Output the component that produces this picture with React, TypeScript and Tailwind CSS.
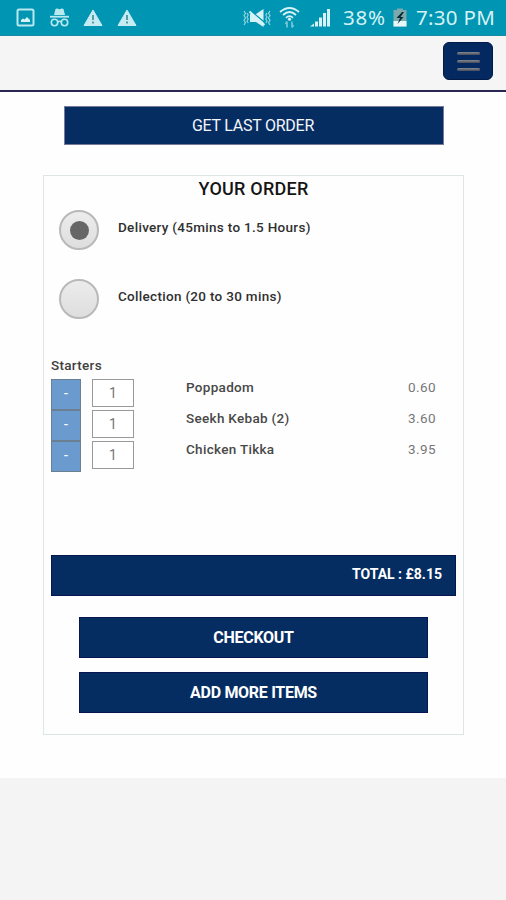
import { useState } from 'react';

const starters = [
  { id: 'poppadom', name: 'Poppadom', qty: 1, price: '0.60' },
  { id: 'seekh-kebab', name: 'Seekh Kebab (2)', qty: 1, price: '3.60' },
  { id: 'chicken-tikka', name: 'Chicken Tikka', qty: 1, price: '3.95' },
];

const methods = [
  { id: 'delivery', label: 'Delivery (45mins to 1.5 Hours)' },
  { id: 'collection', label: 'Collection (20 to 30 mins)' },
];

function WarningIcon() {
  return (
    <svg width="20" height="18" viewBox="0 0 20 18">
      <path d="M10 1 L19 16.5 H1 Z" fill="#c4ecf2" stroke="#c4ecf2" strokeLinejoin="round" />
      <path d="M10 6 V11 M10 12.5 V14.5" stroke="#3d8796" strokeWidth="1.6" />
    </svg>
  );
}

function StatusBar() {
  return (
    <div className="flex h-[36px] items-center justify-between border-b border-[#1b8ba3] bg-[#0095b2] pl-4 pr-[11px]">
      <div className="flex items-center">
        <svg width="19" height="19" viewBox="0 0 19 19">
          <rect x="1.5" y="1.5" width="16" height="16" rx="1.5" fill="none" stroke="#b9e8ef" strokeWidth="2" />
          <path d="M5 14 V12 L7 10.5 L8.5 11.5 L11 9 L14 12 V14 Z" fill="#d5f3f6" />
        </svg>
        <svg className="ml-[14px]" width="21" height="19" viewBox="0 0 21 19">
          <path d="M6.5 1 Q7.5 0 8.5 .6 Q10.5 1.8 12.5 .6 Q13.5 0 14.5 1 L16 7 H5 Z" fill="#b9e8ef" />
          <path d="M1 7.8 H20 V9.6 H1 Z" fill="#b9e8ef" />
          <g fill="none" stroke="#b9e8ef" strokeWidth="1.6">
            <circle cx="5.5" cy="14.5" r="3.2" />
            <circle cx="15.5" cy="14.5" r="3.2" />
            <path d="M8.5 14 Q10.5 12.5 12.5 14" />
          </g>
        </svg>
        <div className="ml-[13px] flex gap-[14px]">
          <WarningIcon />
          <WarningIcon />
        </div>
      </div>
      <div className="flex items-center font-['Noto_Sans',sans-serif] text-[#d5f2f6]">
        {/* Sound off, vibrating */}
        <svg width="29" height="18" viewBox="0 0 29 18">
          <path d="M7 5 H13 L20.5 0 V18 L13 13 H7 Z" fill="#d5f2f6" />
          <path d="M8.5 2.5 L23 14.5" stroke="#0095b2" strokeWidth="1.4" />
          <path d="M6.5 2.5 L21.5 16" stroke="#d5f2f6" strokeWidth="2" />
          <g fill="none" stroke="#8fd5e2" strokeWidth="1.2">
            <path d="M1 2 L2.5 4.3 L1 6.6 L2.5 9 L1 11.3 L2.5 13.6 L1 16 M4 4 L5.2 6 L4 8 L5.2 10 L4 12 L5.2 14" />
            <path d="M27 2 L25.5 4.3 L27 6.6 L25.5 9 L27 11.3 L25.5 13.6 L27 16 M24 4 L22.8 6 L24 8 L22.8 10 L24 12 L22.8 14" />
          </g>
        </svg>
        <svg className="ml-[7px]" width="21" height="21" viewBox="0 0 21 21">
          <g fill="none" stroke="#d5f2f6" strokeWidth="1.8">
            <path d="M1 5 Q10.5 -3 20 5" />
            <path d="M4 8 Q10.5 2 17 8" />
            <path d="M7 10.8 Q10.5 7.3 14 10.8" />
          </g>
          <circle cx="10.5" cy="12.2" r="1.6" fill="#d5f2f6" />
          <path d="M8 20.5 V14.5 M6.5 17 L8 14.5 M13 14.5 V20.5 M14.5 18 L13 20.5" stroke="#75c8d8" strokeWidth="1.7" fill="none" />
        </svg>
        <svg className="ml-[10px]" width="21" height="19" viewBox="0 0 21 19">
          <path d="M0 18.5 L4 15.5 V18.5 Z M5 18.5 V13.5 H8 V18.5 Z M9 18.5 V9.5 H12 V18.5 Z M13 18.5 V5 H16 V18.5 Z M17 18.5 V1 H20 V18.5 Z" fill="#d5f2f6" />
        </svg>
        <span className="ml-3 w-[45px] whitespace-nowrap pb-[2px] text-[20.5px] leading-[32px] tracking-[0.8px]">38%</span>
        <svg className="ml-[5px]" width="14" height="19" viewBox="0 0 14 19">
          <path d="M4 2 V0.5 H10 V2 H13.5 V18.5 H0.5 V2 Z" fill="#7ba9ae" />
          <path d="M0.5 13 H13.5 V18.5 H0.5 Z" fill="#e7f8fa" />
          <path d="M9 4 L3.5 10 H7 L4.5 16 L10.5 9 H7.5 L11 4 Z" fill="#082b30" />
        </svg>
        <span className="ml-[9px] w-[79px] whitespace-nowrap pb-[2px] text-[20.5px] leading-[32px] tracking-[0.3px]">7:30 PM</span>
      </div>
    </div>
  );
}

export default function App() {
  const [method, setMethod] = useState('delivery');

  return (
    <div className="min-h-[900px] w-[506px] bg-[#f4f4f4] font-[Roboto,sans-serif]">
      <StatusBar />

      {/* Site header */}
      <header className="flex h-[56px] items-start justify-end border-b-2 border-[#292653] bg-[#f5f5f5] pr-[13px] pt-[6px]">
        <button className="flex h-[38px] w-[50px] flex-col items-center justify-center gap-[5px] rounded-[6px] border border-[#031a48] bg-[#042960]">
          <span className="h-[3px] w-[23px] rounded-full bg-linear-to-b from-[#858a90] to-[#454c59]" />
          <span className="h-[3px] w-[23px] rounded-full bg-linear-to-b from-[#858a90] to-[#454c59]" />
          <span className="h-[3px] w-[23px] rounded-full bg-linear-to-b from-[#858a90] to-[#454c59]" />
        </button>
      </header>

      <main className="h-[686px] bg-[#fefefe] pt-[14px]">
        <button className="ml-[64px] flex h-[39px] w-[380px] items-center justify-center border border-[#77799a] bg-[#052d62] pr-[2px] text-[16px] tracking-[-0.25px] text-[#f4f5fb]">
          <span className="whitespace-nowrap">GET LAST ORDER</span>
        </button>

        {/* Order card */}
        <section className="ml-[43px] mt-[30px] h-[560px] w-[421px] border border-[#dde7e1] px-[7px]">
          <h1 className="text-center text-[18px] font-medium leading-[26px] tracking-[0.25px] text-[#151515]">YOUR ORDER</h1>

          <div className="flex flex-col gap-7 pl-2 pt-2">
            {methods.map((m) => (
              <button key={m.id} onClick={() => setMethod(m.id)} className="flex h-[41px] items-start text-left">
                <span className="flex h-[40px] w-[40px] items-center justify-center rounded-full border-2 border-[#b9b9b9] bg-linear-to-b from-[#ececec] to-[#dedede]">
                  {method === m.id && <span className="h-[19px] w-[19px] rounded-full bg-[#666]" />}
                </span>
                <span className="ml-[19px] mt-[7px] whitespace-nowrap text-[13.5px] font-medium leading-[20px] tracking-[0.3px] text-[#303030]">{m.label}</span>
              </button>
            ))}
          </div>

          <h2 className="mt-[35px] text-[13.5px] font-medium leading-[20px] tracking-[0.3px] text-[#404040]">Starters</h2>
          <div className="mt-1">
            {starters.map((item) => (
              <div key={item.id} className="flex h-[31px] items-start">
                <button className="flex h-[31px] w-[30px] items-center justify-center border border-[#6c7f91] bg-[#6b9bce] pb-px text-[13px] font-medium text-white">-</button>
                <span className="ml-[11px] flex h-[28px] w-[42px] items-center justify-center border border-[#999] bg-white text-[14px] text-[#777]">{item.qty}</span>
                <span className="ml-[52px] w-[200px] whitespace-nowrap text-[13.5px] font-medium leading-[16px] tracking-[0.3px] text-[#484848]">{item.name}</span>
                <span className="ml-auto mr-[20px] text-[13.5px] leading-[16px] tracking-[0.4px] text-[#777]">{item.price}</span>
              </div>
            ))}
          </div>

          <div className="mt-[83px] flex h-[41px] items-center justify-end border border-[#051650] bg-[#052d62] pb-[2px] pr-[13px] text-[14px] font-bold text-white">
            <span>TOTAL : £8.15</span>
          </div>
          <div className="mx-7 mt-[21px] flex flex-col gap-[14px]">
            <button className="h-[41px] border border-[#051650] bg-[#052d62] text-[16px] font-bold tracking-[-0.3px] text-white">CHECKOUT</button>
            <button className="h-[41px] border border-[#051650] bg-[#052d62] text-[16px] font-bold tracking-[-0.3px] text-white">ADD MORE ITEMS</button>
          </div>
        </section>
      </main>
    </div>
  );
}
